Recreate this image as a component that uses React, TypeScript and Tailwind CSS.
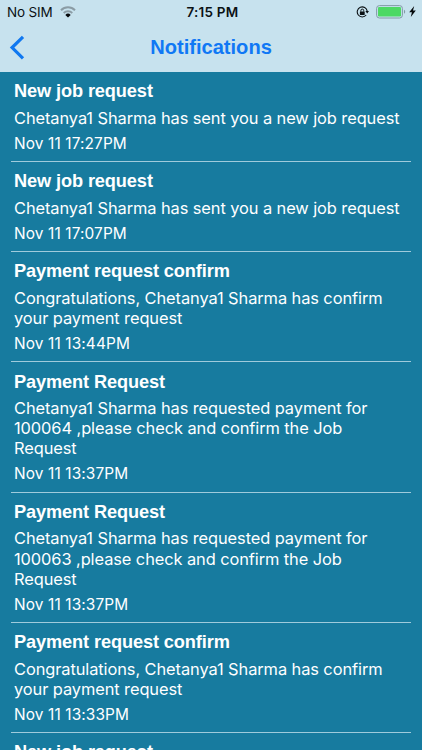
type Notification = { id: number; title: string; lines: string[]; time: string };

const NOTIFICATIONS: Notification[] = [
  {
    id: 1,
    title: "New job request",
    lines: ["Chetanya1 Sharma has sent you a new job request"],
    time: "Nov 11 17:27PM",
  },
  {
    id: 2,
    title: "New job request",
    lines: ["Chetanya1 Sharma has sent you a new job request"],
    time: "Nov 11 17:07PM",
  },
  {
    id: 3,
    title: "Payment request confirm",
    lines: ["Congratulations, Chetanya1 Sharma has confirm", "your payment request"],
    time: "Nov 11 13:44PM",
  },
  {
    id: 4,
    title: "Payment Request",
    lines: [
      "Chetanya1 Sharma has requested payment for",
      "100064 ,please check and confirm the Job",
      "Request",
    ],
    time: "Nov 11 13:37PM",
  },
  {
    id: 5,
    title: "Payment Request",
    lines: [
      "Chetanya1 Sharma has requested payment for",
      "100063 ,please check and confirm the Job",
      "Request",
    ],
    time: "Nov 11 13:37PM",
  },
  {
    id: 6,
    title: "Payment request confirm",
    lines: ["Congratulations, Chetanya1 Sharma has confirm", "your payment request"],
    time: "Nov 11 13:33PM",
  },
  // only the top of this title shows above the fold
  { id: 7, title: "New job request", lines: [], time: "" },
];

function WifiIcon() {
  return (
    <svg viewBox="0 0 16 12" className="h-3 w-4" fill="none" aria-hidden="true">
      <path d="M1 4.2a10 10 0 0 1 14 0" stroke="#8b9ca5" strokeWidth="2" />
      <path d="M3.7 7a6.2 6.2 0 0 1 8.6 0" stroke="#8b9ca5" strokeWidth="1.9" />
      <path d="M8 11.6 5.3 8.9a3.8 3.8 0 0 1 5.4 0z" fill="#05090b" />
    </svg>
  );
}

function RotationLockIcon() {
  return (
    <svg viewBox="0 0 13 12" className="h-3 w-[13px]" fill="none" aria-hidden="true">
      <path d="M10.2 9A5 5 0 1 1 11.2 5.2" stroke="#0b1114" strokeWidth="1.1" />
      <path d="M9.4 5h3.6l-1.8 2.5z" fill="#0b1114" />
      <rect x="3.9" y="5.4" width="4.8" height="3.5" rx="0.4" fill="#0b1114" />
      <path d="M4.9 5.6V4.5a1.4 1.4 0 0 1 2.8 0v1.1" stroke="#0b1114" strokeWidth="1" />
    </svg>
  );
}

function BatteryIcon() {
  return (
    <svg viewBox="0 0 30 14" className="h-3.5 w-[30px]" fill="none" aria-hidden="true">
      <rect x="0.6" y="0.6" width="25.8" height="12.4" rx="2.8" stroke="#829aa5" strokeWidth="1" />
      <rect x="2" y="2" width="23" height="9.6" rx="1.3" fill="#4cd964" />
      <path d="M28 4.8c1.6.5 1.6 3.5 0 4z" fill="#829aa5" />
    </svg>
  );
}

function BoltIcon() {
  return (
    <svg viewBox="0 0 7 11" className="h-[11px] w-[7px]" aria-hidden="true">
      <path d="M5.2 0 .2 6.2h2.7L1.8 11l5-6.6H4z" fill="#05090b" />
    </svg>
  );
}

function StatusBar() {
  return (
    <div className="grid h-[23px] grid-cols-3 items-center pl-[7px] pr-[6px] font-[Inter,sans-serif] text-[13.5px] text-[#0b1114]">
      <div className="flex items-center gap-[7px]">
        <span className="whitespace-nowrap pt-px tracking-[-0.15px]">No SIM</span>
        <WifiIcon />
      </div>
      <span className="pl-[2px] pt-px text-center font-semibold tracking-[0.2px]">7:15 PM</span>
      <div className="flex items-center justify-end">
        <RotationLockIcon />
        <span className="ml-[7px] flex">
          <BatteryIcon />
        </span>
        <span className="ml-[3px] flex">
          <BoltIcon />
        </span>
      </div>
    </div>
  );
}

function NavBar() {
  return (
    <div className="grid h-[49px] grid-cols-[40px_1fr_40px] items-center">
      <button className="flex pl-[9px]" aria-label="Back">
        <svg viewBox="0 0 16 25" className="h-[25px] w-4" fill="none" aria-hidden="true">
          <path d="M14 1.9 3.1 12.6 14 23.3" stroke="#1078f0" strokeWidth="3.2" />
        </svg>
      </button>
      <h1 className="pb-px text-center text-[20.1px] font-bold leading-6 text-[#1078f5]">
        Notifications
      </h1>
    </div>
  );
}

function NotificationRow({ item }: { item: Notification }) {
  return (
    <li className="border-b border-[#9fcbdc] pl-[3px] pt-[8.3px] pb-[7.4px]">
      <h2 className="text-[18.2px] font-bold leading-[22px] tracking-[-0.11px]">{item.title}</h2>
      <p className="mt-[5.5px] whitespace-nowrap font-[Inter,sans-serif] text-[16.4px] leading-[20.15px] tracking-[-0.08px]">
        {item.lines.map((line) => (
          <span key={line} className="block">
            {line}
          </span>
        ))}
      </p>
      <p className="mt-[4.7px] font-[Inter,sans-serif] text-[15.4px] leading-[21px] tracking-[0.13px]">
        {item.time}
      </p>
    </li>
  );
}

export default function App() {
  return (
    <div className="flex h-[750px] w-[422px] flex-col overflow-hidden bg-[#177b9f] font-['Liberation_Sans',Arial,sans-serif] text-white">
      <header className="shrink-0 bg-[#c7e2ee]">
        <StatusBar />
        <NavBar />
      </header>
      <ul className="min-h-0 flex-1 overflow-hidden pl-[11px] pr-[11px]">
        {NOTIFICATIONS.map((item) => (
          <NotificationRow key={item.id} item={item} />
        ))}
      </ul>
    </div>
  );
}
